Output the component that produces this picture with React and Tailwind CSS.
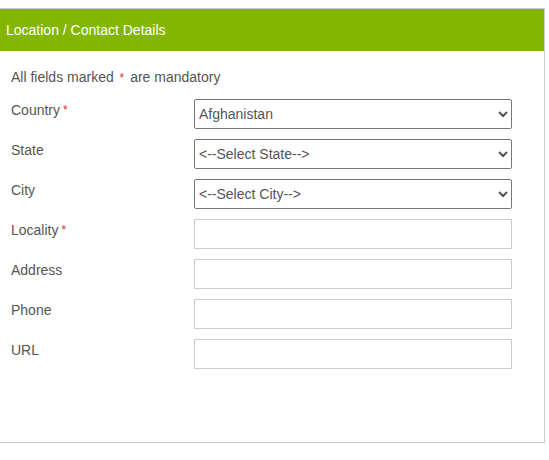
import React from 'react'

const rows = [
  { label: 'Country', req: true, type: 'select', value: 'Afghanistan' },
  { label: 'State', type: 'select', value: '<--Select State-->' },
  { label: 'City', type: 'select', value: '<--Select City-->' },
  { label: 'Locality', req: true },
  { label: 'Address' },
  { label: 'Phone' },
  { label: 'URL' },
]

function Star() {
  return <span className="text-[#e4262b] text-[12px] ml-[3px] align-top">*</span>
}

export default function App() {
  return (
    <div className="pt-2 bg-white min-h-[460px]" style={{ fontFamily: '"Liberation Sans", Arial, sans-serif' }}>
      <div className="w-[545px] border-t border-r border-b border-[#cccccc] pb-[73px]">
        <div className="h-[42px] bg-[#83b600] text-white text-[14px] flex items-center px-[6px]">
          Location / Contact Details
        </div>
        <p className="mt-4 ml-[11px] text-[14px] leading-5 text-[#555555]">
          All fields marked <span className="text-[#e4262b] text-[12px] mx-[2px]">*</span> are mandatory
        </p>
        <div className="mt-[11px] flex flex-col gap-[10px]">
          {rows.map((r) => (
            <div key={r.label} className="flex">
              <div className="w-[194px] pl-[11px] pt-[1px] text-[14px] leading-5 text-[#555555]">
                {r.label}
                {r.req && <Star />}
              </div>
              {r.type === 'select' ? (
                <select
                  defaultValue={r.value}
                  className="w-[318px] h-[30px] border border-[#767676] rounded-[2px] bg-white text-[14px] text-[#555555] pl-0"
                  style={{ fontFamily: '"Liberation Sans", Arial, sans-serif' }}
                >
                  <option>{r.value}</option>
                </select>
              ) : (
                <input className="w-[318px] h-[30px] border border-[#cccccc] bg-white text-[14px] px-[4px] outline-none" />
              )}
            </div>
          ))}
        </div>
      </div>
    </div>
  )
}
